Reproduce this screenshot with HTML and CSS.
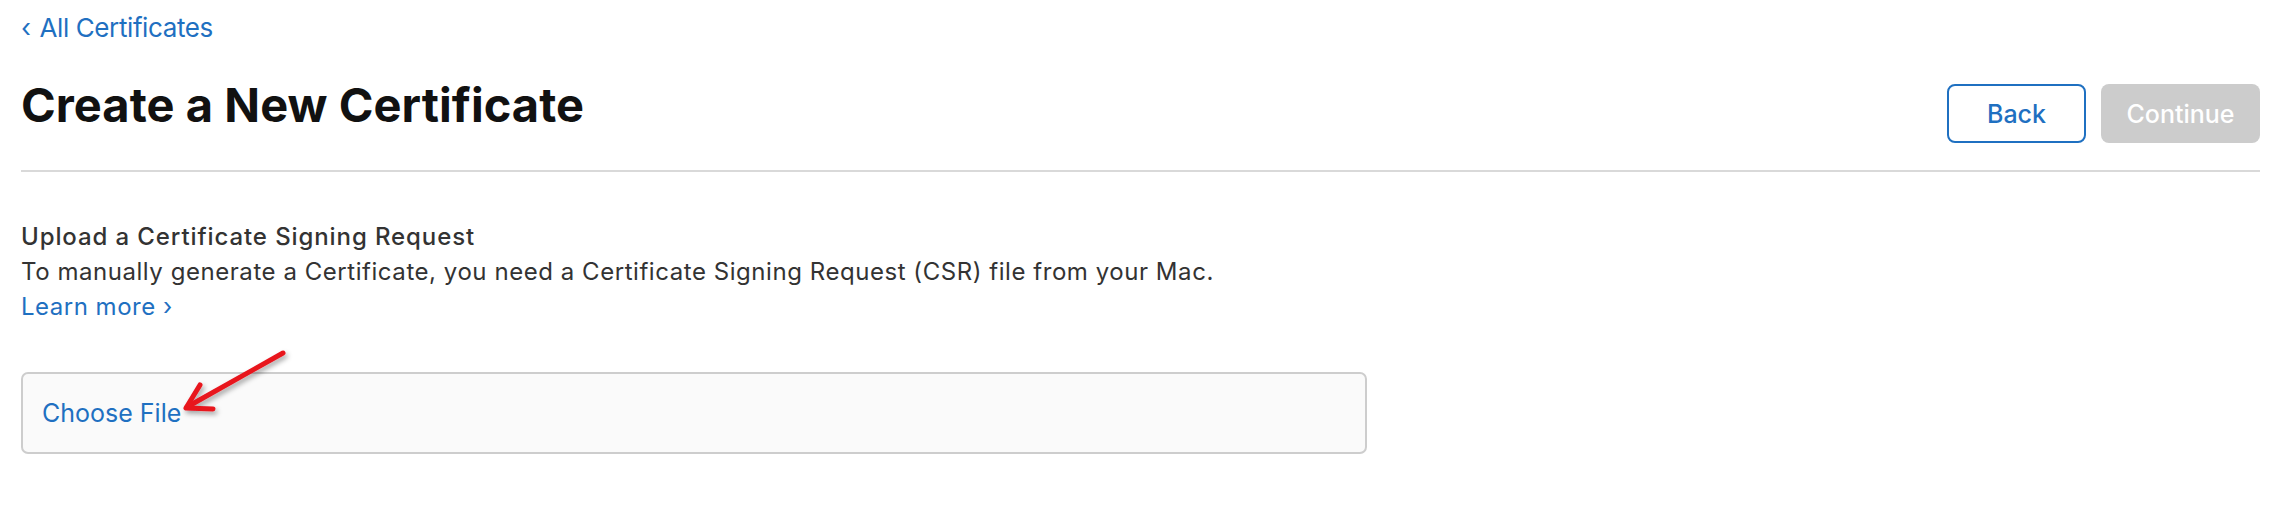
FILE: index.html
```html
<!DOCTYPE html>
<html lang="en">
<head>
<meta charset="utf-8">
<title>Create a New Certificate</title>
<link rel="stylesheet" href="styles.css">
</head>
<body>
<div class="page">
  <a class="back-link" href="#"><span class="chev">‹</span> All Certificates</a>
  <div class="header-row">
    <h1 class="title">Create a New Certificate</h1>
    <div class="actions">
      <button class="btn btn-back">Back</button>
      <button class="btn btn-continue" disabled>Continue</button>
    </div>
  </div>
  <hr class="divider">
  <div class="intro">
    <div class="intro-title">Upload a Certificate Signing Request</div>
    <div class="intro-text">To manually generate a Certificate, you need a Certificate Signing Request (CSR) file from your Mac.</div>
    <a class="learn" href="#">Learn more ›</a>
  </div>
  <div class="file-box">
    <span class="choose">Choose File</span>
  </div>
  <svg class="annot" width="320" height="440" viewBox="0 0 320 440" aria-hidden="true">
    <defs>
      <filter id="sh" x="-20%" y="-20%" width="140%" height="140%">
        <feDropShadow dx="2" dy="3" stdDeviation="2.5" flood-color="#000" flood-opacity="0.35"/>
      </filter>
    </defs>
    <g filter="url(#sh)" stroke="#e8141f" stroke-width="5" stroke-linecap="round" stroke-linejoin="round" fill="none">
      <path d="M283 353 L187 407"/>
      <path d="M200 385 L186 408 L213 409"/>
    </g>
  </svg>
</div>
</body>
</html>
```
FILE: styles.css
```css
html, body {
  margin: 0;
  padding: 0;
  background: #ffffff;
}
body {
  font-family: Inter, "Noto Sans", "Liberation Sans", sans-serif;
  color: #333333;
}
.page {
  position: relative;
  padding: 12px 32px 0 21px;
  display: flex;
  flex-direction: column;
  align-items: flex-start;
}
a {
  text-decoration: none;
  color: #1f70c1;
}
.back-link {
  font-size: 26px;
  line-height: 32px;
  letter-spacing: -0.4px;
}
.chev {
  display: inline-block;
  margin-right: 2px;
}
.header-row {
  margin-top: 33px;
  width: 100%;
  display: flex;
  justify-content: space-between;
  align-items: flex-start;
}
.title {
  margin: 0;
  font-size: 47px;
  line-height: 56px;
  font-weight: 700;
  color: #111111;
  letter-spacing: 0.05px;
}
.actions {
  display: flex;
  gap: 15px;
  padding-top: 7px;
}
.btn {
  font-family: inherit;
  font-size: 25px;
  font-weight: 500;
  height: 59px;
  border-radius: 8px;
  box-sizing: border-box;
  padding: 0;
  cursor: pointer;
}
.btn-back {
  width: 139px;
  background: #ffffff;
  border: 2px solid #1f70c1;
  color: #1f70c1;
}
.btn-continue {
  width: 159px;
  background: #cccccc;
  border: none;
  color: #ffffff;
}
.divider {
  width: 100%;
  margin: 27px 0 0;
  border: none;
  height: 2px;
  background: #d9d9d9;
}
.intro {
  margin-top: 47px;
  font-size: 24px;
  line-height: 35px;
  display: flex;
  flex-direction: column;
  align-items: flex-start;
}
.intro-title {
  font-weight: 500;
  color: #333333;
  letter-spacing: 0.9px;
}
.intro-text {
  color: #333333;
  letter-spacing: 0.55px;
}
.learn {
  letter-spacing: 0.5px;
}
.file-box {
  margin-top: 48px;
  width: 1346px;
  box-sizing: border-box;
  border: 2px solid #cdcdcd;
  border-radius: 7px;
  background: #fafafa;
  padding: 24px 19px;
}
.choose {
  display: block;
  font-size: 25px;
  line-height: 30px;
  color: #1f70c1;
}
.annot {
  position: absolute;
  left: 0;
  top: 0;
  pointer-events: none;
}
```
